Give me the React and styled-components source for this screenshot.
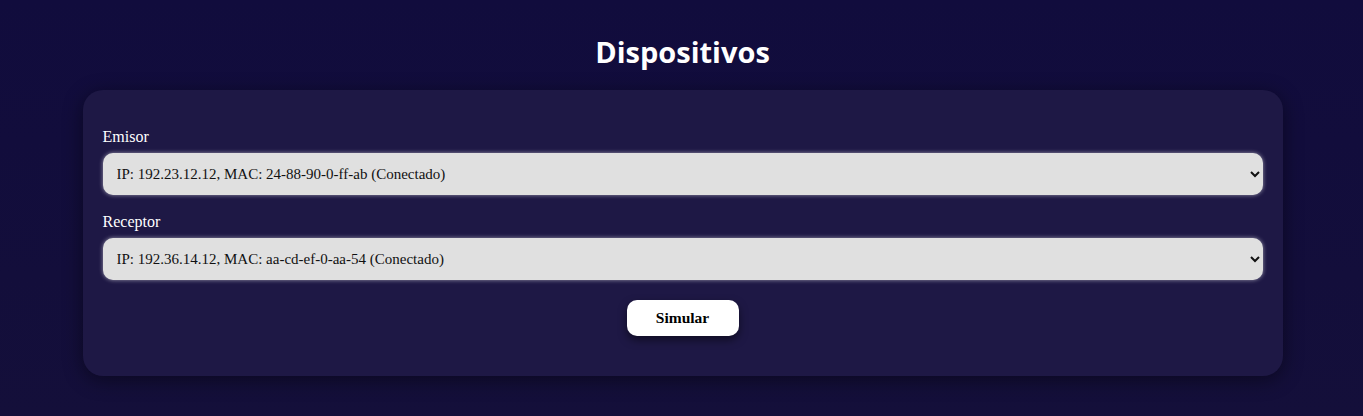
import React, { useState } from 'react';
import styled, { createGlobalStyle } from 'styled-components';

const GlobalStyle = createGlobalStyle`
    html, body {
        margin: 0;
        padding: 0;
        min-height: 100%;
        background: #120e3c;
        font-family: "Liberation Serif", "DejaVu Serif", serif;
    }
`;

const devices = {
    emisor: ['IP: 192.23.12.12, MAC: 24-88-90-0-ff-ab (Conectado)'],
    receptor: ['IP: 192.36.14.12, MAC: aa-cd-ef-0-aa-54 (Conectado)'],
};

export default function App() {
    const [emisor, setEmisor] = useState(devices.emisor[0]);
    const [receptor, setReceptor] = useState(devices.receptor[0]);

    return (
        <Page>
            <GlobalStyle />
            <Title>Dispositivos</Title>
            <Card>
                <Field>
                    <Label>Emisor</Label>
                    <Select value={emisor} onChange={(e) => setEmisor(e.target.value)}>
                        {devices.emisor.map((d) => (
                            <option key={d}>{d}</option>
                        ))}
                    </Select>
                </Field>
                <Field>
                    <Label>Receptor</Label>
                    <Select value={receptor} onChange={(e) => setReceptor(e.target.value)}>
                        {devices.receptor.map((d) => (
                            <option key={d}>{d}</option>
                        ))}
                    </Select>
                </Field>
                <Actions>
                    <Button>Simular</Button>
                </Actions>
            </Card>
        </Page>
    );
}

const Page = styled.div`
    min-height: 416px;
    box-sizing: border-box;
    padding: 34px 0 0 2px;
    display: flex;
    flex-direction: column;
    align-items: center;
    background: linear-gradient(180deg, #110c3d 0%, #140f3a 100%);
`;

const Title = styled.h1`
    margin: 0 0 20px;
    color: #ffffff;
    font-family: "Open Sans", "Noto Sans", sans-serif;
    font-weight: 700;
    font-size: 29px;
    line-height: 36px;
`;

const Card = styled.div`
    width: 1200px;
    box-sizing: border-box;
    padding: 37px 20px 40px;
    background: #1e1845;
    border-radius: 20px;
    box-shadow: 0 4px 20px rgba(0, 0, 0, 0.45);
    display: flex;
    flex-direction: column;
    gap: 17px;
`;

const Field = styled.div`
    display: flex;
    flex-direction: column;
    gap: 7px;
`;

const Label = styled.label`
    color: #ffffff;
    font-size: 16px;
    line-height: 19px;
`;

const Select = styled.select`
    height: 42px;
    padding: 0 10px;
    border: none;
    border-radius: 10px;
    background-color: #e0e0e0;
    color: #111;
    font-family: "Liberation Serif", "DejaVu Serif", serif;
    font-size: 15px;
    box-shadow: 0 0 4px rgba(255, 255, 255, 0.55);
    outline: none;
`;

const Actions = styled.div`
    display: flex;
    justify-content: center;
    padding-top: 3px;
`;

const Button = styled.button`
    width: 112px;
    height: 36px;
    border: none;
    border-radius: 10px;
    background: #ffffff;
    color: #000;
    font-family: "Liberation Serif", "DejaVu Serif", serif;
    font-weight: 700;
    font-size: 15.5px;
    cursor: pointer;
    box-shadow: 0 4px 8px rgba(0, 0, 0, 0.5);
`;
